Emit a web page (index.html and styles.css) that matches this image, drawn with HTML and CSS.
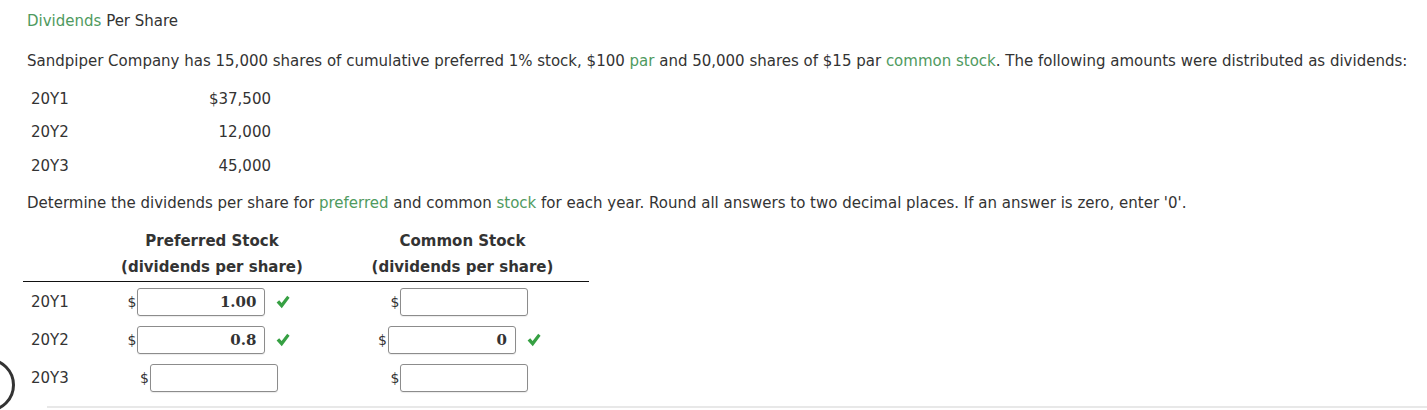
FILE: index.html
```html
<!DOCTYPE html>
<html>
<head>
<meta charset="utf-8">
<link rel="stylesheet" href="styles.css">
</head>
<body>
<div class="page">
  <h1 class="title"><span class="term">Dividends</span> Per Share</h1>
  <p class="intro">Sandpiper Company has 15,000 shares of cumulative preferred 1% stock, $100 <span class="term">par</span> and 50,000 shares of $15 par <span class="term">common stock</span>. The following amounts were distributed as dividends:</p>
  <table class="amounts">
    <tr><td class="yr">20Y1</td><td class="num">$37,500</td></tr>
    <tr><td class="yr">20Y2</td><td class="num">12,000</td></tr>
    <tr><td class="yr">20Y3</td><td class="num">45,000</td></tr>
  </table>
  <p class="instr">Determine the dividends per share for <span class="term">preferred</span> and common <span class="term">stock</span> for each year. Round all answers to two decimal places. If an answer is zero, enter '0'.</p>
  <table class="answers">
    <thead>
      <tr>
        <th class="lab"></th>
        <th class="pref">Preferred Stock<br>(dividends per share)</th>
        <th class="com">Common Stock<br>(dividends per share)</th>
      </tr>
    </thead>
    <tbody>
      <tr>
        <td class="lab">20Y1</td>
        <td class="pref"><span class="cur">$</span><span class="box">1.00</span><svg class="check" viewBox="0 0 14 14"><path d="M0.6 7.4 L3.2 5.2 L5.6 8.0 L11.2 0.8 L13.6 2.8 L5.8 13.2 Z" fill="#36a043"/></svg></td>
        <td class="com"><span class="cur">$</span><span class="box"></span></td>
      </tr>
      <tr>
        <td class="lab">20Y2</td>
        <td class="pref"><span class="cur">$</span><span class="box">0.8</span><svg class="check" viewBox="0 0 14 14"><path d="M0.6 7.4 L3.2 5.2 L5.6 8.0 L11.2 0.8 L13.6 2.8 L5.8 13.2 Z" fill="#36a043"/></svg></td>
        <td class="com"><span class="cur">$</span><span class="box">0</span><svg class="check" viewBox="0 0 14 14"><path d="M0.6 7.4 L3.2 5.2 L5.6 8.0 L11.2 0.8 L13.6 2.8 L5.8 13.2 Z" fill="#36a043"/></svg></td>
      </tr>
      <tr>
        <td class="lab">20Y3</td>
        <td class="pref"><span class="cur">$</span><span class="box"></span></td>
        <td class="com"><span class="cur">$</span><span class="box"></span></td>
      </tr>
    </tbody>
  </table>
  <div class="divider"></div>
</div>
<div class="ring"></div>
</body>
</html>
```

FILE: styles.css
```css
html, body {
  margin: 0;
  padding: 0;
  background: #fff;
}
body {
  font-family: "DejaVu Sans", Verdana, sans-serif;
  font-size: 15px;
  color: #333;
  overflow: hidden;
}
.page {
  padding: 11px 0 0 27px;
}
.term {
  color: #4f9a60;
}
.title {
  margin: 0;
  font-size: 15px;
  font-weight: normal;
  line-height: 20px;
}
.intro {
  margin: 20px 0 0 0;
  line-height: 20px;
  white-space: nowrap;
}
.amounts {
  border-collapse: collapse;
  margin-top: 11px;
}
.amounts td {
  height: 33px;
  padding: 0;
  line-height: 20px;
}
.amounts tr:last-child td {
  height: 34px;
  padding-top: 1px;
}
.amounts .yr {
  padding-left: 4px;
  width: 100px;
}
.amounts .num {
  text-align: right;
  width: 140px;
}
.instr {
  margin: 10px 0 0 0;
  line-height: 20px;
}
.answers {
  border-collapse: collapse;
  margin: 15px 0 0 -4px;
  table-layout: fixed;
  width: 566px;
}
.answers th {
  font-weight: bold;
  line-height: 26px;
  padding: 0 0 1px 6px;
  text-align: center;
  border-bottom: 1px solid #111;
  white-space: nowrap;
}
.answers th.lab { width: 87px; padding: 0; }
.answers th.pref { width: 192px; }
.answers th.com { padding-left: 28px; }
.answers td {
  height: 38px;
  padding: 0;
  text-align: center;
  white-space: nowrap;
}
.answers tbody tr:first-child td {
  padding-top: 1px;
}
.answers td.lab {
  text-align: left;
  padding-left: 8px;
}
.answers td.com {
  padding-left: 22px;
}
.cur {
  display: inline-block;
  vertical-align: middle;
  font-size: 14px;
}
.box {
  display: inline-block;
  vertical-align: middle;
  box-sizing: border-box;
  width: 128px;
  height: 28px;
  margin-left: 1px;
  border: 1px solid #8c8c8c;
  border-radius: 3px;
  box-shadow: 0 1px 1px rgba(0,0,0,0.08);
  padding-right: 8px;
  text-align: right;
  font-family: "DejaVu Serif", "Liberation Serif", serif;
  font-weight: bold;
  font-size: 15px;
  line-height: 26px;
  color: #333;
}
.check {
  display: inline-block;
  vertical-align: middle;
  width: 14px;
  height: 14px;
  margin-left: 11px;
}
.divider {
  margin: 9px 0 0 20px;
  border-top: 2px solid #e8e8e8;
}
.ring {
  position: absolute;
  left: -39px;
  top: 358px;
  width: 48px;
  height: 48px;
  border: 3px solid #333;
  border-radius: 50%;
}
```
